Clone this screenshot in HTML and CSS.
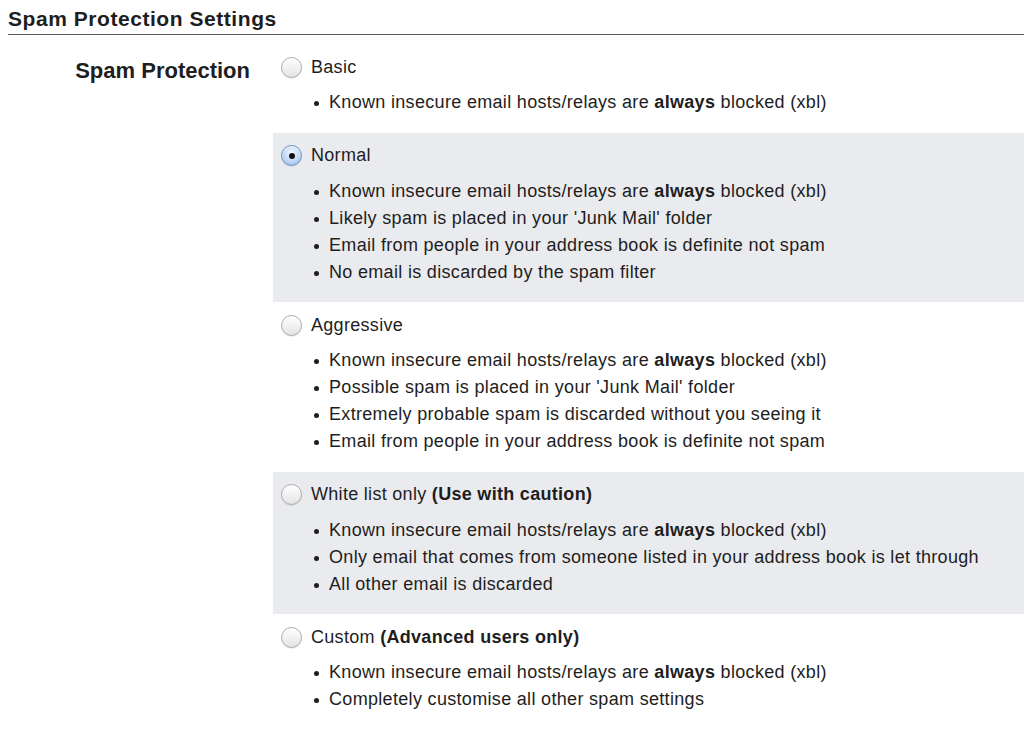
FILE: index.html
```html
<!DOCTYPE html>
<html>
<head>
<meta charset="utf-8">
<title>Spam Protection Settings</title>
<link rel="stylesheet" href="styles.css">
</head>
<body>
<div class="page">
  <h1 class="title">Spam Protection Settings</h1>
  <div class="settings">
    <div class="label-col">Spam Protection</div>
    <div class="options">
      <div class="option">
        <label class="radio-row"><span class="radio"></span>Basic</label>
        <ul class="bullets">
          <li>Known insecure email hosts/relays are <b>always</b> blocked (xbl)</li>
        </ul>
      </div>
      <div class="option shaded">
        <label class="radio-row"><span class="radio checked"></span>Normal</label>
        <ul class="bullets">
          <li>Known insecure email hosts/relays are <b>always</b> blocked (xbl)</li>
          <li>Likely spam is placed in your 'Junk Mail' folder</li>
          <li>Email from people in your address book is definite not spam</li>
          <li>No email is discarded by the spam filter</li>
        </ul>
      </div>
      <div class="option">
        <label class="radio-row"><span class="radio"></span>Aggressive</label>
        <ul class="bullets">
          <li>Known insecure email hosts/relays are <b>always</b> blocked (xbl)</li>
          <li>Possible spam is placed in your 'Junk Mail' folder</li>
          <li>Extremely probable spam is discarded without you seeing it</li>
          <li>Email from people in your address book is definite not spam</li>
        </ul>
      </div>
      <div class="option shaded">
        <label class="radio-row"><span class="radio"></span>White list only&nbsp;<b>(Use with caution)</b></label>
        <ul class="bullets">
          <li>Known insecure email hosts/relays are <b>always</b> blocked (xbl)</li>
          <li>Only email that comes from someone listed in your address book is let through</li>
          <li>All other email is discarded</li>
        </ul>
      </div>
      <div class="option">
        <label class="radio-row"><span class="radio"></span>Custom&nbsp;<b>(Advanced users only)</b></label>
        <ul class="bullets">
          <li>Known insecure email hosts/relays are <b>always</b> blocked (xbl)</li>
          <li>Completely customise all other spam settings</li>
        </ul>
      </div>
    </div>
  </div>
  <div class="footer-rule"></div>
</div>
</body>
</html>
```
FILE: styles.css
```css
html, body {
  margin: 0;
  padding: 0;
  background: #ffffff;
}
body {
  font-family: "Liberation Sans", Arial, sans-serif;
  color: #1e1e1e;
}
.page {
  padding-left: 8px;
}
.title {
  margin: 0;
  padding-top: 6px;
  height: 28px;
  font-size: 21px;
  line-height: 26px;
  letter-spacing: 0.55px;
  font-weight: bold;
  border-bottom: 1px solid #555555;
}
.settings {
  display: flex;
  margin-top: 9px;
}
.label-col {
  width: 265px;
  flex: none;
  box-sizing: border-box;
  padding-right: 23px;
  padding-top: 14px;
  text-align: right;
  font-size: 22px;
  line-height: 26px;
  font-weight: bold;
}
.options {
  flex: 1;
}
.option {
  padding: 11px 0 16.5px 8px;
}
.option.shaded {
  background: #eaebee;
}
.radio-row {
  display: flex;
  align-items: center;
  height: 24px;
  font-size: 18px;
  letter-spacing: 0.3px;
}
.radio {
  width: 21px;
  height: 21px;
  box-sizing: border-box;
  border-radius: 50%;
  border: 1px solid #a9a9a9;
  background: linear-gradient(#ffffff, #e4e4e4);
  box-shadow: inset 0 1px 1px rgba(255,255,255,0.9), 0 1px 1px rgba(0,0,0,0.08);
  margin-right: 9px;
  position: relative;
  flex: none;
}
.radio.checked {
  border-color: #6a8fc7;
  background: radial-gradient(circle at 50% 35%, #f3f8ff 0%, #bcd3f2 60%, #8fb2e3 100%);
}
.radio.checked::after {
  content: "";
  position: absolute;
  left: 6.5px;
  top: 6.5px;
  width: 6px;
  height: 6px;
  border-radius: 50%;
  background: #111;
}
.bullets {
  margin: 10px 0 0 0;
  padding: 0 0 0 48px;
  font-size: 18px;
  letter-spacing: 0.32px;
  line-height: 27px;
  list-style: none;
}
.bullets li {
  position: relative;
  height: 27px;
}
.bullets li::before {
  content: "";
  position: absolute;
  left: -15px;
  top: 12px;
  width: 5px;
  height: 5px;
  border-radius: 50%;
  background: #1e1e1e;
}
.footer-rule {
  height: 1px;
  background: #e6e6e6;
}
```
